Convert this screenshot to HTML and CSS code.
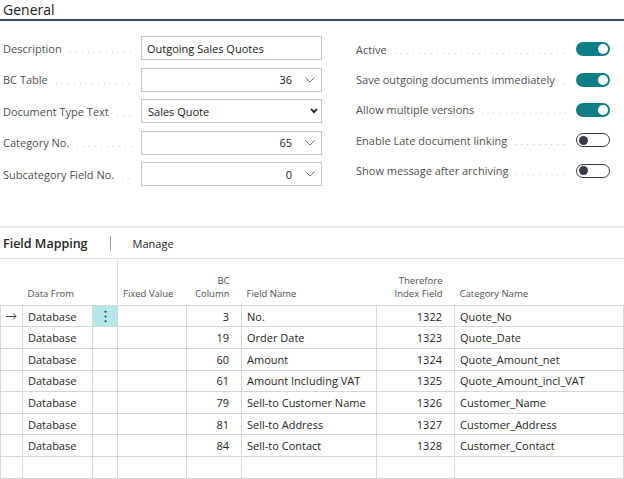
FILE: index.html
```html
<!DOCTYPE html>
<html lang="en">
<head>
<meta charset="utf-8">
<title>General</title>
<link rel="stylesheet" href="styles.css">
</head>
<body>
<div class="section-title">General</div>
<div class="general">
  <div class="col-left">
    <div class="field"><span class="label">Description</span><span class="leader"></span><div class="input"><span class="val">Outgoing Sales Quotes</span></div></div>
    <div class="field"><span class="label">BC Table</span><span class="leader"></span><div class="input num"><span class="val">36</span><svg class="chev" width="10" height="6" viewBox="0 0 10 6"><polyline points="0.5,0.5 5,5 9.5,0.5" fill="none" stroke="#7a7a7a" stroke-width="1"/></svg></div></div>
    <div class="field"><span class="label">Document Type Text</span><span class="leader"></span><div class="input sel"><span class="val">Sales Quote</span><svg class="chev-bold" width="8" height="6" viewBox="0 0 8 6"><polyline points="1,1 4,4.2 7,1" fill="none" stroke="#1a1a1a" stroke-width="1.8"/></svg></div></div>
    <div class="field"><span class="label">Category No.</span><span class="leader"></span><div class="input num"><span class="val">65</span><svg class="chev" width="10" height="6" viewBox="0 0 10 6"><polyline points="0.5,0.5 5,5 9.5,0.5" fill="none" stroke="#7a7a7a" stroke-width="1"/></svg></div></div>
    <div class="field"><span class="label">Subcategory Field No.</span><span class="leader"></span><div class="input num"><span class="val">0</span><svg class="chev" width="10" height="6" viewBox="0 0 10 6"><polyline points="0.5,0.5 5,5 9.5,0.5" fill="none" stroke="#7a7a7a" stroke-width="1"/></svg></div></div>
  </div>
  <div class="col-right">
    <div class="trow"><span class="label">Active</span><span class="leader"></span><span class="toggle on"><span class="knob"></span></span></div>
    <div class="trow"><span class="label">Save outgoing documents immediately</span><span class="leader"></span><span class="toggle on"><span class="knob"></span></span></div>
    <div class="trow"><span class="label">Allow multiple versions</span><span class="leader"></span><span class="toggle on"><span class="knob"></span></span></div>
    <div class="trow"><span class="label">Enable Late document linking</span><span class="leader"></span><span class="toggle off"><span class="knob"></span></span></div>
    <div class="trow"><span class="label">Show message after archiving</span><span class="leader"></span><span class="toggle off"><span class="knob"></span></span></div>
  </div>
</div>
<div class="subpart">
  <div class="bar"><span class="sub-title">Field Mapping</span><span class="sep"></span><span class="action">Manage</span></div>
  <table class="grid">
    <colgroup>
      <col class="c-ind"><col class="c-from"><col class="c-menu"><col class="c-fixed"><col class="c-bc"><col class="c-name"><col class="c-idx"><col class="c-cat">
    </colgroup>
    <thead>
      <tr>
        <th></th>
        <th>Data From</th>
        <th></th>
        <th class="fixed">Fixed Value</th>
        <th class="r">BC<br>Column</th>
        <th>Field Name</th>
        <th class="r">Therefore<br>Index Field</th>
        <th>Category Name</th>
      </tr>
    </thead>
    <tbody>
      <tr>
        <td class="ind"><svg width="11" height="7" viewBox="0 0 11 7"><path d="M0 3.5 H10 M7 0.5 L10 3.5 L7 6.5" fill="none" stroke="#444" stroke-width="1"/></svg></td>
        <td>Database</td>
        <td class="menu"><svg width="3" height="13" viewBox="0 0 3 13"><circle cx="1.5" cy="1.8" r="1" fill="#333"/><circle cx="1.5" cy="6.5" r="1" fill="#333"/><circle cx="1.5" cy="11.2" r="1" fill="#333"/></svg></td>
        <td></td><td class="r">3</td><td>No.</td><td class="r">1322</td><td>Quote_No</td>
      </tr>
      <tr><td></td><td>Database</td><td></td><td></td><td class="r">19</td><td>Order Date</td><td class="r">1323</td><td>Quote_Date</td></tr>
      <tr><td></td><td>Database</td><td></td><td></td><td class="r">60</td><td>Amount</td><td class="r">1324</td><td>Quote_Amount_net</td></tr>
      <tr><td></td><td>Database</td><td></td><td></td><td class="r">61</td><td>Amount Including VAT</td><td class="r">1325</td><td>Quote_Amount_incl_VAT</td></tr>
      <tr><td></td><td>Database</td><td></td><td></td><td class="r">79</td><td>Sell-to Customer Name</td><td class="r">1326</td><td>Customer_Name</td></tr>
      <tr><td></td><td>Database</td><td></td><td></td><td class="r">81</td><td>Sell-to Address</td><td class="r">1327</td><td>Customer_Address</td></tr>
      <tr><td></td><td>Database</td><td></td><td></td><td class="r">84</td><td>Sell-to Contact</td><td class="r">1328</td><td>Customer_Contact</td></tr>
      <tr><td></td><td></td><td></td><td></td><td></td><td></td><td></td><td></td></tr>
    </tbody>
  </table>
</div>
</body>
</html>
```
FILE: styles.css
```css
* { box-sizing: border-box; }
html, body { margin: 0; padding: 0; }
body {
  font-family: "Open Sans", "Noto Sans", sans-serif;
  font-size: 11px;
  color: #212121;
  background: #fff;
  width: 624px;
  height: 479px;
  overflow: hidden;
}
.section-title {
  height: 21px;
  border-bottom: 2px solid #3f4c5e;
  font-size: 14px;
  line-height: 19px;
  padding-left: 3px;
  color: #212121;
}
.general {
  display: flex;
  gap: 34px;
  padding: 15px 0 0 3px;
}
.col-left {
  width: 319px;
  display: flex;
  flex-direction: column;
  gap: 7.6px;
}
.field {
  display: flex;
  align-items: center;
  height: 24px;
}
.label {
  color: #505050;
  white-space: nowrap;
}
.leader {
  flex: 1;
  height: 1px;
  margin: 8px 8px 0 8px;
  background-image: linear-gradient(to right, #c2c2c2 1px, transparent 1px);
  background-size: 6px 1px;
  background-repeat: repeat-x;
}
.input {
  flex: none;
  width: 181px;
  height: 24px;
  border: 1px solid #c6c6c6;
  display: flex;
  align-items: center;
  padding: 0 6px 0 5px;
  color: #212121;
}
.input.num { justify-content: flex-end; }
.input.num .val { margin-right: 13px; }
.input.sel { justify-content: space-between; padding-right: 3px; padding-left: 6px; }
.chev { display: block; }
.chev-bold { display: block; }
.col-right {
  width: 254px;
  display: flex;
  flex-direction: column;
  margin-top: -2px;
}
.trow {
  height: 30.4px;
  display: flex;
  align-items: center;
}
.trow .leader { margin-right: 9px; }
.toggle {
  flex: none;
  width: 34px;
  height: 14px;
  border-radius: 7px;
  display: flex;
  align-items: center;
  padding: 0 2px;
}
.toggle.on {
  background: #0e7f86;
  justify-content: flex-end;
}
.toggle.on .knob {
  width: 10px;
  height: 10px;
  border-radius: 50%;
  background: #fff;
}
.toggle.off {
  background: #fff;
  border: 1.5px solid #3b3b3b;
  padding: 0 1.5px;
}
.toggle.off .knob {
  width: 9px;
  height: 9px;
  border-radius: 50%;
  background: #3a3a48;
}
.subpart {
  margin-top: 40px;
  border-top: 2px solid #ebebeb;
}
.bar {
  height: 31px;
  display: flex;
  align-items: center;
  padding-left: 3px;
  border-bottom: 1px solid #e1e1e1;
}
.sub-title {
  font-size: 12.5px;
  font-weight: 600;
  color: #262626;
}
.sep {
  width: 1px;
  height: 15px;
  background: #9c9c9c;
  margin: 0 22px 0 22px;
}
.action { font-size: 11px; color: #262626; }
.grid {
  border-collapse: collapse;
  table-layout: fixed;
  width: 623px;
}
.c-ind { width: 22px; }
.c-from { width: 70px; }
.c-menu { width: 25px; }
.c-fixed { width: 69px; }
.c-bc { width: 55px; }
.c-name { width: 135px; }
.c-idx { width: 78px; }
.c-cat { width: 169px; }
.grid thead th {
  height: 46px;
  vertical-align: bottom;
  padding: 0 5px 5px 5px;
  font-weight: 400;
  font-size: 9.5px;
  line-height: 13px;
  color: #505050;
  text-align: left;
  white-space: nowrap;
}
.grid thead th.r { text-align: right; padding-right: 12px; }
.grid thead th.fixed { border-left: 1px solid #e1e1e1; }
.grid tbody td {
  border: 1px solid #d6d6d6;
  height: 21.6px;
  padding: 1px 5px 0 5px;
  white-space: nowrap;
  overflow: hidden;
  color: #262626;
  line-height: 14px;
}
.grid tbody td.r { text-align: right; padding-right: 12px; }
.grid tbody td.ind { padding: 0 0 0 5px; }
.grid tbody td.ind svg { display: block; }
.grid tbody td.menu { background: #b4e6eb; text-align: center; padding: 0; }
.grid tbody td.menu svg { display: block; margin: 0 auto; }
```
